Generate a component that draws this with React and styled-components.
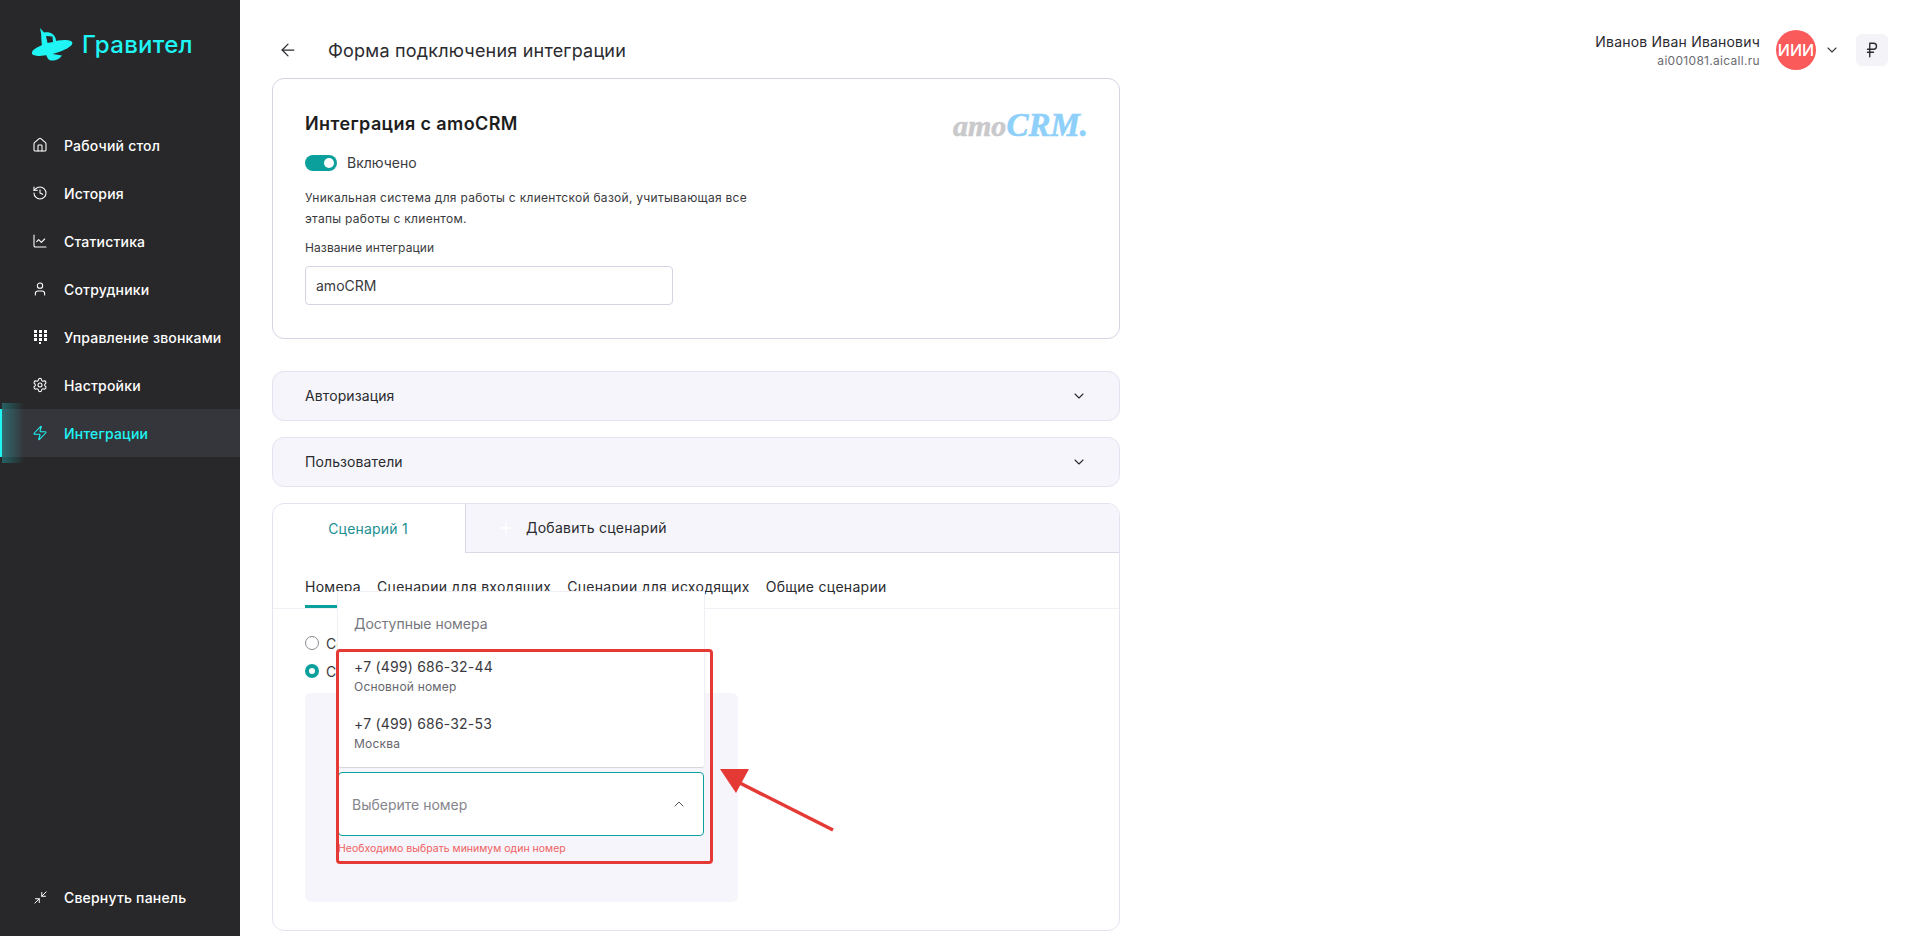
import React from 'react'
import styled, { createGlobalStyle } from 'styled-components'
import { House, History, ChartLine, User, Settings, Zap, Minimize2, ArrowLeft, ChevronDown, ChevronUp, RussianRuble, Plus } from 'lucide-react'

const GlobalStyle = createGlobalStyle`
  html, body { margin: 0; padding: 0; height: 100%; background: #fff; overflow: hidden; }
  body { font-family: Inter, "Noto Sans", sans-serif; color: #2b2b2f; }
  * { box-sizing: border-box; }
`

const KeypadIcon = () => (
  <svg width="14" height="14" viewBox="0 0 14 14" fill="#fff">
    {[0, 5, 10].map((x) => [0, 4, 8].map((y) => (
      <rect key={`${x}-${y}`} x={x + 1} y={y} width="3" height="3" />
    )))}
    <rect x="6" y="12" width="2" height="2" />
  </svg>
)

const LogoIcon = () => (
  <svg width="41" height="35" viewBox="32 24 41 35">
    <path fill="#1ff5f5" d="M40 25 L44 29.5 C50 28.5 55 31 56 37 L56 44 L43 46 C41 41 41.5 33 41 30 Z" />
    <ellipse cx="52" cy="45" rx="21" ry="6" transform="rotate(-15 52 45)" fill="#1ff5f5" />
    <path fill="#1ff5f5" d="M46 50 L62 52.5 C60 56 55 58 51 57.5 C48 57 46.5 54 46 50 Z" />
    <path fill="#28282a" d="M46 33 L52.5 33.5 L53 39 L47.5 40 Z" />
  </svg>
)

const menu = [
  { label: 'Рабочий стол', Icon: House },
  { label: 'История', Icon: History },
  { label: 'Статистика', Icon: ChartLine },
  { label: 'Сотрудники', Icon: User },
  { label: 'Управление звонками', Icon: KeypadIcon },
  { label: 'Настройки', Icon: Settings },
  { label: 'Интеграции', Icon: Zap, active: true },
]

export default function App() {
  return (
    <Page>
      <GlobalStyle />
      <Sidebar>
        <Brand>
          <LogoIcon />
          <BrandName>Гравител</BrandName>
        </Brand>
        <Menu>
          {menu.map(({ label, Icon, active }) => (
            <MenuItem key={label} $active={active}>
              <MenuIcon><Icon size={16} strokeWidth={1.6} /></MenuIcon>
              {label}
            </MenuItem>
          ))}
        </Menu>
        <Collapse>
          <MenuIcon><Minimize2 size={15} strokeWidth={1.6} /></MenuIcon>
          Свернуть панель
        </Collapse>
      </Sidebar>

      <Main>
        <TopBar>
          <BackButton><ArrowLeft size={20} strokeWidth={1.5} /></BackButton>
          <PageTitle>Форма подключения интеграции</PageTitle>
          <UserBlock>
            <UserText>
              <UserName>Иванов Иван Иванович</UserName>
              <UserDomain>ai001081.aicall.ru</UserDomain>
            </UserText>
            <Avatar>ИИИ</Avatar>
            <ChevronDown size={16} strokeWidth={1.6} color="#3a3a40" />
            <RubleButton><RussianRuble size={18} strokeWidth={1.8} /></RubleButton>
          </UserBlock>
        </TopBar>

        <Column>
          <Card>
            <CardHead>
              <CardTitle>Интеграция с amoCRM</CardTitle>
              <AmoLogo>amo<AmoBlue>CRM.</AmoBlue></AmoLogo>
            </CardHead>
            <ToggleRow>
              <Toggle />
              Включено
            </ToggleRow>
            <Description>
              Уникальная система для работы с клиентской базой, учитывающая все этапы работы с клиентом.
            </Description>
            <FieldLabel>Название интеграции</FieldLabel>
            <TextField>amoCRM</TextField>
          </Card>

          <Accordion>Авторизация<ChevronDown size={16} strokeWidth={1.6} /></Accordion>
          <Accordion>Пользователи<ChevronDown size={16} strokeWidth={1.6} /></Accordion>

          <ScenarioCard>
            <ScenarioTabs>
              <ScenarioTab>Сценарий 1</ScenarioTab>
              <AddScenario><Plus size={16} color="#fff" />Добавить сценарий</AddScenario>
            </ScenarioTabs>
            <SubTabs>
              <SubTab $active>Номера</SubTab>
              <SubTab>Сценарии для входящих</SubTab>
              <SubTab>Сценарии для исходящих</SubTab>
              <SubTab>Общие сценарии</SubTab>
            </SubTabs>
            <ScenarioBody>
              <RadioRow><Radio />Со всех номеров</RadioRow>
              <RadioRow><Radio $checked />С выбранных номеров</RadioRow>
              <NumbersPanel>
                <SelectWrap>
                  <Dropdown>
                    <DropdownTitle>Доступные номера</DropdownTitle>
                    <Phone>+7 (499) 686-32-44</Phone>
                    <PhoneNote>Основной номер</PhoneNote>
                    <Phone>+7 (499) 686-32-53</Phone>
                    <PhoneNote>Москва</PhoneNote>
                  </Dropdown>
                  <SelectBox>
                    Выберите номер
                    <ChevronUp size={16} strokeWidth={1.5} color="#55555c" />
                  </SelectBox>
                  <ErrorText>Необходимо выбрать минимум один номер</ErrorText>
                  <RedFrame />
                  <RedArrow width="122" height="72" viewBox="0 0 122 72">
                    <path d="M10 9 L113 61" stroke="#e53935" strokeWidth="3.5" fill="none" />
                    <path d="M0 0 L29 0 L16 24 Z" fill="#e53935" />
                  </RedArrow>
                </SelectWrap>
              </NumbersPanel>
            </ScenarioBody>
          </ScenarioCard>
        </Column>
      </Main>
    </Page>
  )
}

const Page = styled.div`
  display: flex;
  width: 100%;
  height: 936px;
  overflow: hidden;
`
const Sidebar = styled.aside`
  flex: 0 0 240px;
  display: flex;
  flex-direction: column;
  background: #28282a;
  color: #fff;
`
const Brand = styled.div`
  display: flex;
  align-items: center;
  gap: 9px;
  height: 59px;
  margin-top: 15px;
  padding-left: 32px;
`
const BrandName = styled.div`
  font-size: 24px;
  font-weight: 500;
  color: #1ff5f5;
  letter-spacing: 0.3px;
`
const Menu = styled.nav`
  display: flex;
  flex-direction: column;
  margin-top: 47px;
`
const MenuItem = styled.div`
  position: relative;
  display: flex;
  align-items: center;
  height: 48px;
  padding-left: 32px;
  font-size: 14px;
  font-weight: 500;
  letter-spacing: 0.19px;
  color: ${(p) => (p.$active ? '#1ff5f5' : '#fff')};
  background: ${(p) => (p.$active ? '#35363b' : 'transparent')};
  ${(p) => p.$active && `
    border-left: 2px solid #1ff5f5;
    padding-left: 30px;
    &::before {
      content: '';
      position: absolute;
      left: 0;
      top: -6px;
      bottom: -6px;
      width: 22px;
      background: linear-gradient(90deg, rgba(31, 245, 245, 0.28), rgba(31, 245, 245, 0));
    }
  `}
`
const MenuIcon = styled.span`
  display: flex;
  justify-content: center;
  align-items: center;
  width: 16px;
  margin-right: 16px;
`
const Collapse = styled.div`
  display: flex;
  align-items: center;
  margin-top: auto;
  height: 48px;
  margin-bottom: 15px;
  padding-left: 32px;
  font-size: 14px;
  font-weight: 500;
  letter-spacing: 0.19px;
`
const Main = styled.main`
  flex: 1;
  display: flex;
  flex-direction: column;
  min-width: 0;
`
const TopBar = styled.header`
  display: flex;
  align-items: center;
  height: 78px;
  padding: 22px 20px 0 38px;
  flex-shrink: 0;
`
const BackButton = styled.span`
  display: flex;
  width: 50px;
  color: #2b2b2f;
`
const PageTitle = styled.h1`
  margin: 0;
  font-size: 18px;
  font-weight: 400;
  letter-spacing: 0.2px;
`
const UserBlock = styled.div`
  display: flex;
  align-items: center;
  margin-left: auto;
`
const UserText = styled.div`
  display: flex;
  flex-direction: column;
  align-items: flex-end;
  gap: 3px;
  margin-right: 16px;
`
const UserName = styled.div`
  font-size: 14px;
  letter-spacing: 0.2px;
  color: #2b2b2f;
`
const UserDomain = styled.div`
  font-size: 12px;
  letter-spacing: 0.3px;
  color: #6b6b72;
`
const Avatar = styled.div`
  display: flex;
  align-items: center;
  justify-content: center;
  width: 40px;
  height: 40px;
  margin-right: 8px;
  border-radius: 50%;
  background: #fb5a5a;
  color: #fff;
  font-size: 16px;
  font-weight: 500;
`
const RubleButton = styled.div`
  display: flex;
  align-items: center;
  justify-content: center;
  width: 32px;
  height: 32px;
  margin-left: 16px;
  border-radius: 6px;
  background: #f3f3f8;
`
const Column = styled.div`
  display: flex;
  flex-direction: column;
  gap: 16px;
  width: 848px;
  margin-left: 32px;
`
const Card = styled.section`
  height: 261px;
  margin-bottom: 16px;
  padding: 35px 32px 0;
  border: 1px solid #d4d4e4;
  border-radius: 12px;
  background: #fff;
`
const CardHead = styled.div`
  display: flex;
  justify-content: space-between;
  align-items: flex-start;
`
const CardTitle = styled.h2`
  margin: 0;
  font-size: 18px;
  line-height: 20px;
  font-weight: 600;
  letter-spacing: 0.4px;
  color: #1d1d20;
`
const AmoLogo = styled.div`
  margin: -5px -1px 0 0;
  font-family: "Liberation Serif", serif;
  font-style: italic;
  font-weight: 700;
  font-size: 30px;
  line-height: 32px;
  color: #c9c9cc;
  -webkit-text-stroke: 0.6px currentColor;
`
const AmoBlue = styled.span`
  font-size: 33px;
  color: #8ed0f9;
`
const ToggleRow = styled.div`
  display: flex;
  align-items: center;
  gap: 10px;
  margin-top: 12px;
  font-size: 14px;
  color: #3a3a40;
`
const Toggle = styled.span`
  position: relative;
  display: block;
  width: 32px;
  height: 16px;
  border-radius: 8px;
  background: #0ca09c;
  &::after {
    content: '';
    position: absolute;
    right: 3px;
    top: 3px;
    width: 10px;
    height: 10px;
    border-radius: 50%;
    background: #fff;
  }
`
const Description = styled.p`
  width: 470px;
  margin: 16px 0 0;
  font-size: 12px;
  line-height: 21px;
  letter-spacing: 0.28px;
  color: #3a3a40;
`
const FieldLabel = styled.div`
  margin-top: 11px;
  font-size: 12px;
  line-height: 16px;
  letter-spacing: 0.1px;
  color: #3a3a40;
`
const TextField = styled.div`
  display: flex;
  align-items: center;
  width: 368px;
  height: 39px;
  margin-top: 10px;
  padding-left: 10px;
  border: 1px solid #d4d4e4;
  border-radius: 4px;
  font-size: 14px;
  color: #3a3a40;
`
const Accordion = styled.div`
  display: flex;
  align-items: center;
  justify-content: space-between;
  height: 50px;
  padding: 0 32px 1px;
  border: 1px solid #e3e3ef;
  border-radius: 12px;
  background: #f5f5fb;
  font-size: 14px;
  letter-spacing: 0.1px;
  color: #2b2b2f;
`
const ScenarioCard = styled.section`
  height: 428px;
  border: 1px solid #e3e3ef;
  border-radius: 12px;
  overflow: visible;
`
const ScenarioTabs = styled.div`
  display: flex;
  height: 49px;
`
const ScenarioTab = styled.div`
  display: flex;
  align-items: center;
  justify-content: center;
  flex: 0 0 192px;
  padding: 0 2px 1px 0;
  font-size: 14px;
  letter-spacing: 0.2px;
  color: #1d8f93;
`
const AddScenario = styled.div`
  flex: 1;
  display: flex;
  align-items: center;
  gap: 12px;
  padding: 0 0 1px 32px;
  border-left: 1px solid #d8d8e6;
  border-bottom: 1px solid #d8d8e6;
  border-top-right-radius: 12px;
  background: #f5f5fb;
  font-size: 14px;
  letter-spacing: 0.25px;
  color: #2b2b2f;
`
const SubTabs = styled.div`
  display: flex;
  gap: 16px;
  height: 56px;
  padding: 0 32px;
  border-bottom: 1px solid #f0f0f6;
`
const SubTab = styled.div`
  display: flex;
  align-items: center;
  padding-top: 14px;
  font-size: 14px;
  letter-spacing: 0.28px;
  color: #2b2b2f;
  border-bottom: 3px solid ${(p) => (p.$active ? '#0ca09c' : 'transparent')};
`
const ScenarioBody = styled.div`
  display: flex;
  flex-direction: column;
  padding: 20px 32px 0;
`
const RadioRow = styled.div`
  display: flex;
  align-items: center;
  gap: 7px;
  height: 28px;
  font-size: 14px;
  color: #3a3a40;
`
const Radio = styled.span`
  width: 14px;
  height: 14px;
  border-radius: 50%;
  border: ${(p) => (p.$checked ? '4px solid #0ca09c' : '1.5px solid #8a8a92')};
`
const NumbersPanel = styled.div`
  width: 433px;
  height: 209px;
  margin-top: 8px;
  padding: 79px 0 0 33px;
  border-radius: 6px;
  background: #f5f5fb;
`
const SelectWrap = styled.div`
  position: relative;
  width: 366px;
`
const Dropdown = styled.div`
  position: absolute;
  left: -1px;
  right: -1px;
  bottom: calc(100% + 4px);
  height: 177px;
  padding: 23px 16px 0;
  background: #fff;
  border: 1px solid #eeeef4;
  border-bottom-color: #d8d8dc;
  border-radius: 0 0 4px 4px;
`
const DropdownTitle = styled.div`
  margin-bottom: 25px;
  font-size: 14px;
  line-height: 18px;
  color: #77777e;
`
const Phone = styled.div`
  font-size: 14px;
  line-height: 18px;
  letter-spacing: 0.2px;
  color: #3a3a40;
`
const PhoneNote = styled.div`
  margin: 3px 0 20px;
  font-size: 12px;
  line-height: 16px;
  letter-spacing: 0.2px;
  color: #66666d;
`
const SelectBox = styled.div`
  display: flex;
  align-items: center;
  justify-content: space-between;
  height: 64px;
  padding: 0 16px 0 13px;
  border: 1px solid #0ca09c;
  border-radius: 4px;
  background: #fff;
  font-size: 14px;
  color: #85858c;
`
const ErrorText = styled.div`
  margin-top: 6px;
  font-size: 10.5px;
  line-height: 13px;
  color: #f06262;
`
const RedFrame = styled.div`
  position: absolute;
  left: -2px;
  top: -123px;
  width: 377px;
  height: 215px;
  border: 3px solid #e53935;
  border-radius: 4px;
  pointer-events: none;
`
const RedArrow = styled.svg`
  position: absolute;
  left: 382px;
  top: -3px;
`
